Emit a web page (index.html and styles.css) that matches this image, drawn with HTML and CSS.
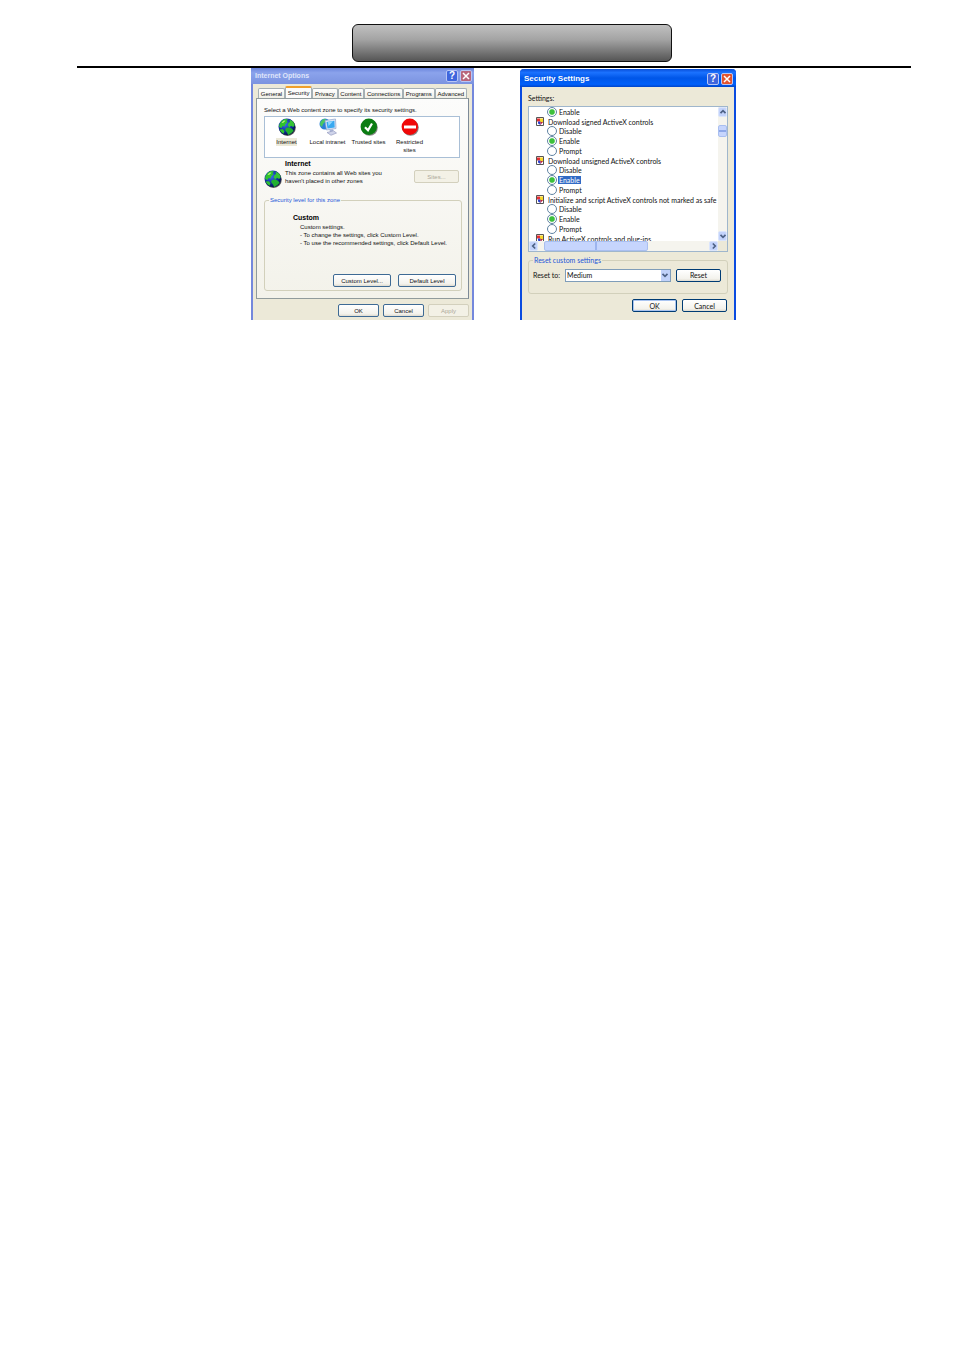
FILE: index.html
```html
<!DOCTYPE html>
<html lang="en">
<head>
    <meta charset="UTF-8">
    <meta name="viewport" content="width=device-width, initial-scale=1.0">
    <title>Internet Options</title>
    <link rel="stylesheet" href="styles.css">
</head>
<body>
    <svg class="defs" aria-hidden="true">
        <defs>
            <radialGradient id="sea" cx="40%" cy="35%" r="65%">
                <stop offset="0" stop-color="#3b6ff0"/>
                <stop offset="0.6" stop-color="#1233a8"/>
                <stop offset="1" stop-color="#04104e"/>
            </radialGradient>
            <symbol id="globe" viewBox="0 0 18 18">
                <circle cx="9.5" cy="9.6" r="8.3" fill="#555"/>
                <circle cx="8.8" cy="8.8" r="8.3" fill="url(#sea)"/>
                <path d="M1.500 6 4 2.600 7 1l3 .2L8.600 3l1 1.300L7.500 6 6.500 8.400 4.500 8 3.500 10 1 9z" fill="#2fc22f"/>
                <path d="M11.500 1.500 15 3.600 16.800 7l-1.600 2L13 7.800l-1.500 1.400L9.500 7.400 10.500 5 12 4z" fill="#35c435"/>
                <path d="M8 10 11 9.300l3 1.500 1.600 2L13.500 15l-3.300 2-1.200-2.500L7 12z" fill="#22b030"/>
                <path d="M1.500 11.500 5 11.200 6.500 13.500 5.500 15.800 3.200 14z" fill="#2fc22f"/>
                <path d="M3.500 4.500 6 2.600 7.500 2.800 5 5z" fill="#b9f27a"/>
            </symbol>
            <symbol id="page" viewBox="0 0 8 9">
                <path d="M.5.500h7v8h-7z" fill="#fff" stroke="#555"/>
                <path d="M1 1.500h3v3H1z" fill="#e83030"/>
                <path d="M4 1.500h3v4H4z" fill="#f8d628"/>
                <path d="M2 4.500h2.500V8L2 6.500z" fill="#2a3fd0"/>
                <path d="M4.500 5H7L4.500 8z" fill="#c02040"/>
            </symbol>
            <symbol id="cross" viewBox="0 0 10 10">
                <path d="M2 2l6 6M8 2 2 8" stroke="#fff" stroke-width="1.500" fill="none"/>
            </symbol>
            <symbol id="chevron" viewBox="0 0 8 8">
                <path d="M1.500 2.800 4 5.300 6.500 2.800" stroke="#4d6185" stroke-width="1.700" fill="none"/>
            </symbol>
        </defs>
    </svg>

    <header class="page-header">
        <div class="banner"></div>
    </header>

    <main class="dialogs">
        <section class="dialog options" aria-label="Internet Options">
            <div class="titlebar">
                <h2>Internet Options</h2>
                <button class="caption" type="button" aria-label="Help">?</button>
                <button class="caption close" type="button" aria-label="Close"><svg><use href="#cross"/></svg></button>
            </div>
            <div class="options-body">
                <nav class="tabs">
                    <button type="button">General</button>
                    <button type="button" class="active">Security</button>
                    <button type="button">Privacy</button>
                    <button type="button">Content</button>
                    <button type="button">Connections</button>
                    <button type="button">Programs</button>
                    <button type="button">Advanced</button>
                </nav>
                <div class="panel">
                    <p class="hint">Select a Web content zone to specify its security settings.</p>
                    <div class="zones">
                        <button type="button" class="zone selected">
                            <svg><use href="#globe"/></svg>
                            <span>Internet</span>
                        </button>
                        <button type="button" class="zone">
                            <svg viewBox="0 0 18 18">
                                <circle cx="6" cy="6" r="5.500" fill="#2b7fd8"/>
                                <path d="M1.500 4 4 1.200 7 1 6 4 4 6 3 9 1 7z" fill="#4cc860"/>
                                <path d="M6 2.500 16.500 1 17 10.500 7.500 12z" fill="#dce6f5" stroke="#8fa4cc" stroke-width=".7"/>
                                <path d="M7.500 4 15.400 2.700 15.700 9.400 8.500 10.500z" fill="#38a8f0"/>
                                <path d="M9 4 14 3.200 9.500 8z" fill="#8ed8ff"/>
                                <path d="M10.500 11.800 14 11.200 14.500 13.500 11 14z" fill="#a9b4d6"/>
                                <path d="M8 14.500 14.500 12.800 17.500 15 12 17.300z" fill="#cfd4ea" stroke="#8a90b8" stroke-width=".6"/>
                            </svg>
                            <span>Local intranet</span>
                        </button>
                        <button type="button" class="zone">
                            <svg viewBox="0 0 18 18">
                                <circle cx="9.600" cy="9.600" r="8.200" fill="#888"/>
                                <circle cx="8.800" cy="8.800" r="8.200" fill="#0b7d12"/>
                                <path d="M5 9.200 8 12.200 12 5.500" stroke="#fff" stroke-width="2.200" fill="none"/>
                            </svg>
                            <span>Trusted sites</span>
                        </button>
                        <button type="button" class="zone">
                            <svg viewBox="0 0 18 18">
                                <circle cx="9.600" cy="9.600" r="8.200" fill="#888"/>
                                <circle cx="8.800" cy="8.800" r="8.200" fill="#f00808"/>
                                <path d="M3 7.500h12v3H3z" fill="#fff"/>
                            </svg>
                            <span>Restricted<br>sites</span>
                        </button>
                    </div>
                    <div class="zone-info">
                        <svg class="zone-icon"><use href="#globe"/></svg>
                        <div class="zone-text">
                            <h3>Internet</h3>
                            <p>This zone contains all Web sites you<br>haven't placed in other zones</p>
                        </div>
                        <button class="btn" type="button" disabled>Sites...</button>
                    </div>
                    <fieldset class="level">
                        <legend>Security level for this zone</legend>
                        <div class="level-text">
                            <h3>Custom</h3>
                            <p>Custom settings.<br>- To change the settings, click Custom Level.<br>- To use the recommended settings, click Default Level.</p>
                        </div>
                        <div class="level-buttons">
                            <button class="btn" type="button">Custom Level...</button>
                            <button class="btn" type="button">Default Level</button>
                        </div>
                    </fieldset>
                </div>
                <div class="footer">
                    <button class="btn" type="button">OK</button>
                    <button class="btn" type="button">Cancel</button>
                    <button class="btn" type="button" disabled>Apply</button>
                </div>
            </div>
        </section>

        <section class="dialog settings" aria-label="Security Settings">
            <div class="titlebar">
                <h2>Security Settings</h2>
                <button class="caption" type="button" aria-label="Help">?</button>
                <button class="caption close" type="button" aria-label="Close"><svg><use href="#cross"/></svg></button>
            </div>
            <form class="settings-body">
                <p class="hint">Settings:</p>
                <div class="listbox">
                    <div class="list">
                        <label class="choice"><input type="radio" name="plugins" checked><span>Enable</span></label>
                        <p class="group"><svg><use href="#page"/></svg>Download signed ActiveX controls</p>
                        <label class="choice"><input type="radio" name="signed"><span>Disable</span></label>
                        <label class="choice"><input type="radio" name="signed" checked><span>Enable</span></label>
                        <label class="choice"><input type="radio" name="signed"><span>Prompt</span></label>
                        <p class="group"><svg><use href="#page"/></svg>Download unsigned ActiveX controls</p>
                        <label class="choice"><input type="radio" name="unsigned"><span>Disable</span></label>
                        <label class="choice current"><input type="radio" name="unsigned" checked><span>Enable</span></label>
                        <label class="choice"><input type="radio" name="unsigned"><span>Prompt</span></label>
                        <p class="group"><svg><use href="#page"/></svg>Initialize and script ActiveX controls not marked as safe</p>
                        <label class="choice"><input type="radio" name="script"><span>Disable</span></label>
                        <label class="choice"><input type="radio" name="script" checked><span>Enable</span></label>
                        <label class="choice"><input type="radio" name="script"><span>Prompt</span></label>
                        <p class="group"><svg><use href="#page"/></svg>Run ActiveX controls and plug-ins</p>
                    </div>
                    <div class="scroll vertical">
                        <button type="button" aria-label="Scroll up"><svg class="up"><use href="#chevron"/></svg></button>
                        <span class="thumb"></span>
                        <button type="button" aria-label="Scroll down"><svg><use href="#chevron"/></svg></button>
                    </div>
                    <div class="scroll horizontal">
                        <button type="button" aria-label="Scroll left"><svg class="left"><use href="#chevron"/></svg></button>
                        <span class="thumb"></span>
                        <button type="button" aria-label="Scroll right"><svg class="right"><use href="#chevron"/></svg></button>
                    </div>
                    <div class="corner"></div>
                </div>
                <fieldset class="reset">
                    <legend>Reset custom settings</legend>
                    <div class="reset-row">
                        <label for="reset-to">Reset to:</label>
                        <div class="combo">
                            <select id="reset-to">
                                <option>Medium</option>
                            </select>
                            <span class="combo-arrow"><svg><use href="#chevron"/></svg></span>
                        </div>
                        <button class="btn" type="button">Reset</button>
                    </div>
                </fieldset>
                <div class="footer">
                    <button class="btn default" type="button">OK</button>
                    <button class="btn" type="button">Cancel</button>
                </div>
            </form>
        </section>
    </main>
</body>
</html>
```

FILE: styles.css
```css
* {
    box-sizing: border-box;
}
body {
    margin: 0;
    padding: 24px 43px 24px 77px;
    background-color: #ffffff;
    color: #111111;
    font-family: "Liberation Sans", Arial, sans-serif;
    font-size: 6px;
    line-height: 8px;
}
h2, h3, p {
    margin: 0;
}
h3 {
    color: #000000;
    font-size: 7px;
    line-height: 8px;
}
button, select, input {
    margin: 0;
    padding: 0;
    color: inherit;
    font: inherit;
}
svg {
    display: block;
    flex: none;
}
.defs {
    position: absolute;
    width: 0;
    height: 0;
}

/* page header */
.page-header {
    border-bottom: 2px solid #000000;
    padding: 0 0 4px 275px;
}
.banner {
    max-width: 320px;
    height: 38px;
    border: 1px solid #111111;
    border-radius: 6px;
    background: linear-gradient(#c0c0c0, #a4a4a4 40%, #555555);
}

/* dialogs */
.dialogs {
    display: flex;
    justify-content: flex-start;
    gap: 46px;
    padding-left: 174px;
}
.dialog {
    display: flex;
    flex-direction: column;
    min-width: 0;
    background-color: #ece9d8;
}
.options {
    flex: 0 1 223px;
    border: solid #7488dc;
    border-width: 0 2px;
}
.settings {
    flex: 0 1 216px;
    margin-top: 1px;
    border: solid #0a4be0;
    border-width: 0 2px;
    border-radius: 4px 4px 0 0;
    font-family: Lato, "Liberation Sans", sans-serif;
    font-size: 7px;
}
.titlebar {
    display: flex;
    align-items: center;
    gap: 2px;
    margin: 0 -2px;
    color: #ffffff;
}
.titlebar h2 {
    flex: 1;
    font-family: "Liberation Sans", Arial, sans-serif;
    font-size: 8px;
    line-height: 10px;
}
.options .titlebar {
    height: 16px;
    padding: 0 2px 0 4px;
    background: linear-gradient(#6c86dc, #8ba3ec 30%, #7b93e0);
    color: #dfe4fa;
}
.options .titlebar h2 {
    font-size: 7px;
}
.settings .titlebar {
    height: 18px;
    padding: 2px 3px 0 4px;
    border-radius: 4px 4px 0 0;
    background: linear-gradient(#0a4fd8, #1b72ff 20%, #0056e8 50%, #0060fa 85%, #0044c8);
}
.caption {
    display: flex;
    align-items: center;
    justify-content: center;
    width: 12px;
    height: 12px;
    border: 1px solid #b8c6f5;
    border-radius: 2px;
    background-color: #3f66dd;
    color: #ffffff;
    font-family: "Liberation Sans", Arial, sans-serif;
    font-size: 10px;
    font-weight: bold;
    line-height: 10px;
}
.caption svg {
    width: 10px;
    height: 10px;
}
.close {
    background-color: #e3542f;
}
.options .close {
    background-color: #b8667c;
}
.hint {
    line-height: 10px;
}

/* buttons */
.btn {
    height: 13px;
    border: 1px solid #003c74;
    border-radius: 2px;
    background: linear-gradient(#ffffff, #f3f2ec 80%, #dedace);
    line-height: 10px;
}
.options .btn {
    border-color: #3e6a94;
}
.btn.default {
    box-shadow: inset 0 0 0 1px #a9c4f0;
}
.options .btn:disabled {
    border-color: #d3d0bd;
    background: #f3f1e6;
    color: #aca899;
}
.footer {
    display: flex;
    justify-content: flex-end;
}

/* internet options */
.options-body {
    padding: 2px 3px 3px;
}
.tabs {
    display: flex;
    align-items: flex-end;
    height: 12px;
    padding: 0 2px;
}
.tabs button {
    flex: 1 1 auto;
    height: 10px;
    border: 1px solid #a5b0b5;
    border-bottom: 0;
    border-radius: 2px 2px 0 0;
    background: linear-gradient(#ffffff, #f0efe6);
    line-height: 8px;
}
.tabs .active {
    height: 12px;
    border-top: 2px solid #f0a02c;
    background: #fcfcfb;
    line-height: 9px;
}
.panel {
    padding: 6px 6px 7px 7px;
    border: 1px solid #919b9c;
    border-right-color: #7d8a98;
    background: linear-gradient(#fcfcfb, #f3f2ea);
}
.zones {
    display: flex;
    height: 42px;
    margin: 1px 2px 0 0;
    padding: 1px 0 0 1px;
    border: 1px solid #a9bfd6;
    background-color: #ffffff;
}
.zone {
    display: flex;
    flex: 0 0 41px;
    flex-direction: column;
    align-items: center;
    gap: 2px;
    border: 0;
    background: none;
    line-height: 8px;
}
.zone svg {
    width: 18px;
    height: 18px;
}
.zone span {
    white-space: nowrap;
}
.zone.selected span {
    background-color: #ece9d8;
}
.zone-info {
    display: flex;
    gap: 3px;
    height: 38px;
    padding: 2px 3px 0 0;
}
.zone-icon {
    width: 18px;
    height: 18px;
    margin-top: 10px;
}
.zone-text {
    flex: 1;
}
.zone-text p {
    margin-top: 1px;
}
.zone-info .btn {
    width: 45px;
    margin-top: 10px;
}
fieldset {
    min-width: 0;
    margin: 0;
    padding: 0;
    border: 1px solid #d2d0bb;
    border-radius: 3px;
}
legend {
    margin-left: 4px;
    padding: 0 1px;
    color: #1e56d8;
    line-height: 8px;
}
.level {
    height: 95px;
}
.level-text {
    padding: 10px 0 0 28px;
}
.level-text p {
    padding: 1px 0 0 7px;
    white-space: nowrap;
}
.level-buttons {
    display: flex;
    justify-content: flex-end;
    gap: 7px;
    padding: 27px 5px 0 0;
}
.level-buttons .btn {
    width: 58px;
}
.options .footer {
    gap: 4px;
    padding-top: 5px;
}
.options .footer .btn {
    width: 41px;
}

/* security settings */
.settings-body {
    padding: 6px 6px 8px;
}
.listbox {
    display: grid;
    grid-template-columns: 1fr 9px;
    grid-template-rows: 1fr 10px;
    height: 146px;
    margin-top: 3px;
    border: 1px solid #9fb6cc;
    background-color: #ffffff;
}
.list {
    min-width: 0;
    padding-left: 7px;
    overflow: hidden;
    white-space: nowrap;
}
.choice {
    display: flex;
    align-items: center;
    gap: 1px;
    height: 10px;
    padding-left: 11px;
}
.choice input {
    appearance: none;
    width: 10px;
    height: 10px;
    border: 1px solid #5f83a3;
    border-radius: 50%;
    background-color: #ffffff;
}
.choice input:checked {
    background: radial-gradient(#3cc03c 40%, #ffffff 60%);
}
.choice span {
    padding: 0 1px;
}
.current span {
    background-color: #316ac5;
    color: #ffffff;
}
.group {
    display: flex;
    align-items: center;
    gap: 4px;
    height: 9px;
}
.group svg {
    width: 8px;
    height: 9px;
}
.scroll {
    display: flex;
    background-color: #f5f4ee;
}
.vertical {
    flex-direction: column;
}
.corner {
    background-color: #ece9d8;
}
.scroll button {
    display: flex;
    align-items: center;
    justify-content: center;
    flex: none;
    width: 9px;
    height: 10px;
    border: 1px solid #dbe5fc;
    border-radius: 2px;
    background-color: #c3d3fb;
}
.scroll svg {
    width: 8px;
    height: 8px;
}
.scroll .up {
    transform: rotate(180deg);
}
.scroll .left {
    transform: rotate(90deg);
}
.scroll .right {
    transform: rotate(-90deg);
}
.thumb {
    border: 1px solid #a9bff0;
    border-radius: 2px;
    background: #c6d5fd;
}
.vertical .thumb {
    height: 12px;
    margin: 8px 0 auto;
    background: linear-gradient(#c6d5fd 40%, #8ea8e8 40% 60%, #c6d5fd 60%);
}
.horizontal .thumb {
    flex: 0 0 104px;
    margin: 0 auto 0 6px;
    background: linear-gradient(90deg, #c6d5fd 49%, #9db4ee 49% 51%, #c6d5fd 51%);
}
.reset {
    height: 38px;
    margin-top: 4px;
}
.reset-row {
    display: flex;
    align-items: center;
    height: 18px;
    margin-top: 2px;
    padding: 0 6px 0 4px;
}
.reset-row label {
    flex: 0 0 32px;
}
.combo {
    position: relative;
    flex: 1;
    margin-right: 5px;
}
.combo select {
    appearance: none;
    display: block;
    width: 100%;
    height: 13px;
    padding: 0 12px 0 1px;
    border: 1px solid #7f9db9;
    border-radius: 0;
    background-color: #ffffff;
}
.combo-arrow {
    position: absolute;
    top: 1px;
    right: 1px;
    display: flex;
    align-items: center;
    width: 9px;
    height: 11px;
    background-color: #c1d2fa;
    pointer-events: none;
}
.combo-arrow svg {
    width: 8px;
    height: 8px;
}
.reset-row .btn {
    flex: 0 0 45px;
}
.settings .footer {
    gap: 5px;
    padding: 5px 1px 0 0;
}
.settings .footer .btn {
    width: 45px;
}
```
